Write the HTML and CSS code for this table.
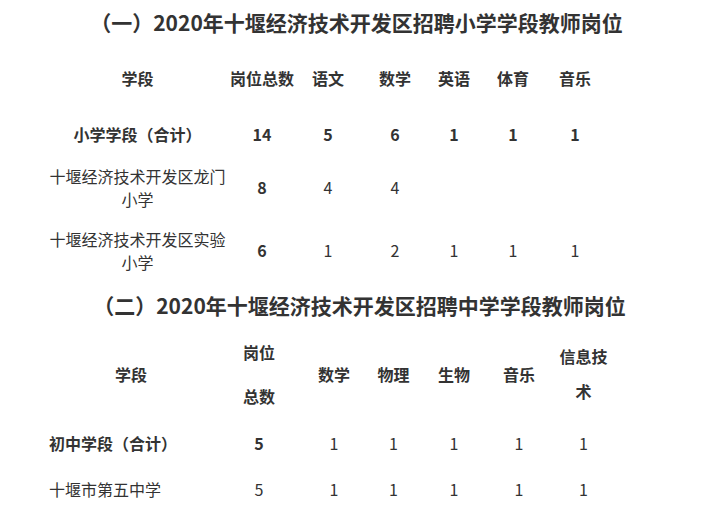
FILE: index.html
```html
<!DOCTYPE html>
<html lang="zh-CN">
<head>
<meta charset="utf-8">
<title>2020年十堰经济技术开发区招聘教师岗位</title>
<link rel="stylesheet" href="styles.css">
</head>
<body>
<h2 class="title">（一）2020年十堰经济技术开发区招聘小学学段教师岗位</h2>
<table class="grid grid-primary">
  <colgroup>
    <col class="p1"><col class="p2"><col class="p3"><col class="p4"><col class="p5"><col class="p6"><col class="p7">
  </colgroup>
  <tr class="row-head b">
    <td>学段</td><td>岗位总数</td><td>语文</td><td>数学</td><td>英语</td><td>体育</td><td>音乐</td>
  </tr>
  <tr class="row-sum b">
    <td>小学学段（合计）</td><td>14</td><td>5</td><td>6</td><td>1</td><td>1</td><td>1</td>
  </tr>
  <tr class="row-tall">
    <td>十堰经济技术开发区龙门<br>小学</td><td class="b">8</td><td>4</td><td>4</td><td></td><td></td><td></td>
  </tr>
  <tr class="row-tall">
    <td>十堰经济技术开发区实验<br>小学</td><td class="b">6</td><td>1</td><td>2</td><td>1</td><td>1</td><td>1</td>
  </tr>
</table>

<h2 class="title title-second">（二）2020年十堰经济技术开发区招聘中学学段教师岗位</h2>
<table class="grid grid-middle">
  <colgroup>
    <col class="m1"><col class="m2"><col class="m3"><col class="m4"><col class="m5"><col class="m6"><col class="m7">
  </colgroup>
  <tr class="row-head2 b">
    <td>学段</td><td><span class="lh44">岗位<br>总数</span></td><td>数学</td><td>物理</td><td>生物</td><td>音乐</td><td><span class="lh35">信息技<br>术</span></td>
  </tr>
  <tr class="row-mid">
    <td class="left b">初中学段（合计）</td><td class="b">5</td><td>1</td><td>1</td><td>1</td><td>1</td><td>1</td>
  </tr>
  <tr class="row-mid">
    <td class="left">十堰市第五中学</td><td>5</td><td>1</td><td>1</td><td>1</td><td>1</td><td>1</td>
  </tr>
</table>
</body>
</html>
```

FILE: styles.css
```css
html, body {
  margin: 0;
  padding: 0;
  background: #ffffff;
}

body {
  font-family: "Noto Sans CJK SC", "Noto Sans", sans-serif;
  color: #333333;
}

.title {
  margin: 0;
  padding-left: 6px;
  height: 44px;
  line-height: 44px;
  font-size: 21px;
  font-weight: bold;
  text-align: center;
  white-space: nowrap;
  color: #333333;
}

.title-second {
  height: 46px;
  line-height: 46px;
  padding-left: 12px;
}

.grid {
  border-collapse: collapse;
  border-spacing: 0;
  table-layout: fixed;
  font-size: 16px;
  line-height: 23px;
}

.grid td {
  padding: 0;
  text-align: center;
  vertical-align: middle;
  white-space: nowrap;
}

.b {
  font-weight: bold;
}

/* table one */
.grid-primary {
  margin-left: 45px;
  width: 559px;
}
.p1 { width: 185px; }
.p2 { width: 64px; }
.p3 { width: 68px; }
.p4 { width: 66px; }
.p5 { width: 52px; }
.p6 { width: 66px; }
.p7 { width: 58px; }

.row-head { height: 69px; }
.row-sum { height: 43px; }
.row-tall { height: 63px; }

/* table two */
.grid-middle {
  margin-left: 41px;
  width: 580px;
}
.m1 { width: 180px; }
.m2 { width: 76px; }
.m3 { width: 74px; }
.m4 { width: 45px; }
.m5 { width: 76px; }
.m6 { width: 54px; }
.m7 { width: 75px; }

.row-head2 { height: 92px; }
.row-mid { height: 46px; }

.grid td.left {
  text-align: left;
  padding-left: 8px;
}

.lh44 {
  display: inline-block;
  line-height: 44px;
}

.lh35 {
  display: inline-block;
  line-height: 35px;
}
```
